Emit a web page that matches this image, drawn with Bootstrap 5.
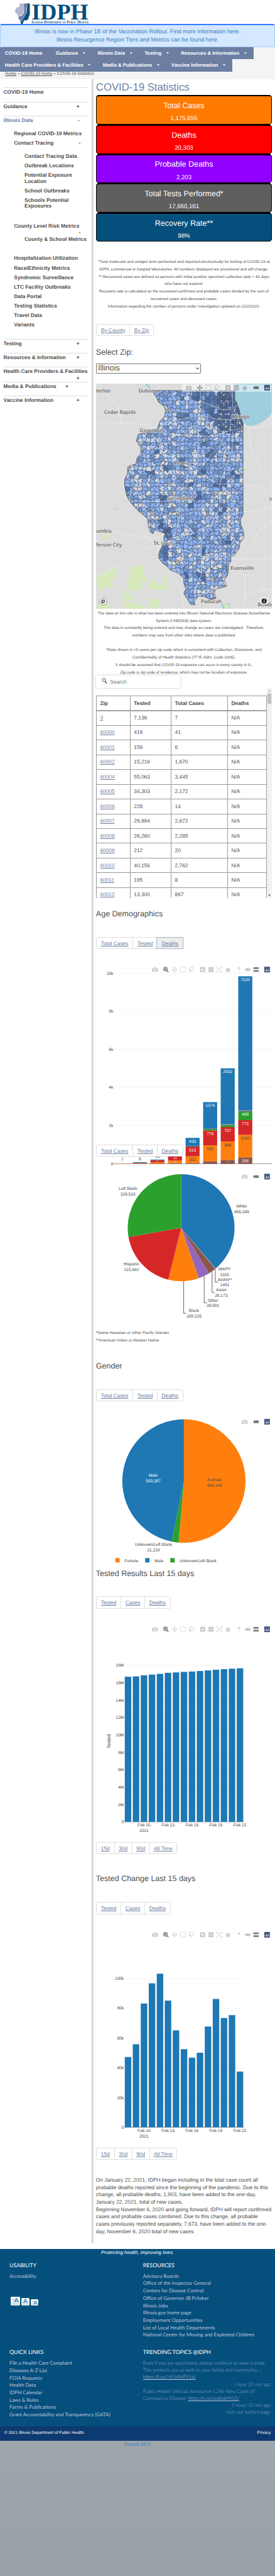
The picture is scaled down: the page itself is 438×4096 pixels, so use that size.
<!DOCTYPE html>
<html lang="en">
<head>
<meta charset="utf-8">
<meta name="viewport" content="width=device-width, initial-scale=1">
<title>COVID-19 Statistics | IDPH</title>
<link rel="stylesheet" href="https://cdn.jsdelivr.net/npm/bootstrap@5.3.0/dist/css/bootstrap.min.css">
<style>
html,body{background:#9aa4a9;margin:0;overflow:hidden}
.page{zoom:.55827;height:7337px;overflow:hidden;font:15px/21px "Liberation Sans",Arial,sans-serif;color:#4d4d4d;text-rendering:geometricPrecision;background:linear-gradient(#9ca6ab 95%,#97a1a7)}
.page svg{display:block;overflow:hidden}
.page svg text{font-family:"Liberation Sans",Arial,sans-serif}
.brand{height:68px}
.notice{height:66px;border:1px solid #a5cdfb;border-top:4px solid #337aff;border-radius:5px;background:#d4e8ff;color:#3a80bb;font-size:16.35px;line-height:22px;padding-top:8px;white-space:nowrap}
.topnav{background:#f4f4f4;height:92px;border-radius:0 0 6px 6px}
.bar-row{display:inline-flex;background:#6c7fa3;color:#fff;font-weight:700;font-size:14px;height:35px;line-height:36px;padding-left:0;vertical-align:top;white-space:nowrap}
.bar-row a{color:#fff;text-decoration:none;padding:0 41.6px 0 14px;position:relative}
.bar-row a:not(.plain)::after{content:"";position:absolute;right:20.5px;top:14px;border:4.7px solid transparent;border-top:5.5px solid #e9edf5;border-bottom:0}
.bar-row a.plain{padding-right:24px}
.crumbs{font-size:11.9px;line-height:16px;padding-left:15px}
.crumbs a{color:#4d4d4d}
.side{width:262px;padding:23.5px 10px 0;flex:none;font-weight:700;line-height:17px;white-space:nowrap}
.side ul{list-style:none;margin:0;padding:0}
.top-item{border-top:1px solid #ddd;min-height:40px;padding-top:3.5px}
.top-item>.hd{display:flex;flex-wrap:wrap;line-height:17px;padding-right:25px}
.hd i{font-style:normal;margin-left:auto}
.lvl2{padding:5px 0 5px 30px}
.lvl3{padding:5px 0 5px 60px}
.main-col{width:512.5px;padding-left:10px;border-left:1px solid #c4c4c4;background:linear-gradient(90deg,#dcdcdc,#fff 7px);height:6164px;flex:none}
.shell{background:#fff;height:6179px}
.main-col>*{width:502px}
h1.ttl{font-size:30px;line-height:45px;color:#6c7fa3;margin:0;font-weight:400}
h3.sec{font-size:22.4px;line-height:30px;margin:0;font-weight:400}
.stat{height:83.55px;border:1px solid #000;border-top:4px solid #000;border-radius:8px;color:#fff;text-align:center;padding-top:16px}
.stat b{display:block;font-weight:400;font-size:22.4px;line-height:22px}
.stat span{display:block;font-size:17.3px;line-height:20px;margin-top:16px}
.note{font-size:11.25px;text-align:center;white-space:nowrap}
.tabs{display:flex;width:max-content!important;height:34.5px;border:1px solid #dedede;border-radius:5px;background:#fff;line-height:34px}
.tabs a{color:#6c7fa3;text-align:center;border-left:1px solid #dedede;text-underline-offset:1.5px}
.tabs a:first-child{border:0}
.tabs a.on{background:#eee;outline:1px dotted #6c7fa3;outline-offset:-1px}
.zipsel{width:300px!important;height:29px;border:1px solid #777;border-radius:2px;font-size:22.4px;line-height:28px;padding:0 4px;display:flex;justify-content:space-between;align-items:center}
.finder{width:240px!important;height:36px;border-radius:4px;background:#fff;box-shadow:0 0 8px rgba(0,0,0,.2);padding-left:17px;line-height:36px;color:#757575;display:flex;gap:7px;position:relative}
.grid-box{height:599.5px;overflow:hidden;display:flex}
.grid-box table{width:487px;table-layout:fixed;border-collapse:collapse;margin-top:22px;flex:none;height:588.4px}
.grid-box td,.grid-box th{border:1px solid #999;height:42.03px;padding:0 10px;line-height:20px}
.grid-box thead tr{box-shadow:0 2px 2px rgba(0,0,0,.35)}
.grid-box td a{color:#6c7fa3}
.foot{background:#054f7d;height:506px;font-family:Lato,sans-serif;font-size:14.3px;color:#bcc3db;white-space:nowrap}
.foot h4{font-size:15.8px;line-height:21px;color:#fff;font-weight:400;margin:0}
.foot .tw{font-weight:300;font-size:13.8px;line-height:20px;color:#9fb4cf}
.foot .tw u{color:#bcc3db}
.abtn{background:linear-gradient(#fff,#d5dbe0);border-radius:3px;color:#2c7fb8;font-weight:700;text-align:center}
.legal{background:#0d3a70;color:#fff;height:40px;font-size:11.9px;line-height:39px;padding:0 12px}
</style>
</head>
<body>
<div class="page">
<div style="background:#fff">
<header class="brand"><svg width="300" height="68" viewBox="0 0 300 68">
<path d="M73 10H85L85 40L80 56H78L74 59L71 57L66 63L65 68H60L58 60L62 55L66 46L74 38L77 25Z" fill="#054f7d"/>
<path d="M66 10H75L78 17L75 27L77 34L72 42L69 49L66 52L63 60L58 59L52 53L53 48L49 46L62 45L68 36V24Z" fill="#6c7fa3" stroke="#fff" stroke-width=".8"/>
<path d="M53 10H66L69 22L67 36L61 45H50L48 40L42 34L44 26L48 21L54 20L56 14Z" fill="#b3b8d2" stroke="#fff" stroke-width=".6"/>
<g fill="#054f7d"><text x="90" y="56" font-size="64" font-weight="700" textLength="162" lengthAdjust="spacingAndGlyphs" style="font-family:'Liberation Serif',serif">IDPH</text>
<text x="90" y="67" font-size="11.5" textLength="162" lengthAdjust="spacingAndGlyphs" style="font-family:'Liberation Serif',serif;font-variant:small-caps;font-weight:700">Illinois Department of Public Health</text></g></svg></header>
<div class="notice text-center">Illinois is now in Phase 1B of the Vaccination Rollout. Find more information here.<br>Illinois Resurgence Region Tiers and Metrics can be found here.</div>
<nav class="topnav">
<div class="bar-row"><a class="plain">COVID-19 Home</a><a>Guidance</a><a>Illinois Data</a><a>Testing</a><a>Resources &amp; Information</a></div><br>
<div class="bar-row"><a>Health Care Providers &amp; Facilities</a><a>Media &amp; Publications</a><a>Vaccine Information</a></div>
<div class="crumbs"><a href="#">Home</a> » <a href="#">COVID-19 Home</a> » COVID-19 Statistics</div>
</nav>
</div>
<div class="shell d-flex">
<aside class="side"><ul>
<li class="top-item"><div class="hd">COVID-19 Home</div></li>
<li class="top-item"><div class="hd">Guidance<i>+</i></div></li>
<li class="top-item" style="height:635.3px"><div class="hd" style="color:#6c7fa3;padding-bottom:16.5px">Illinois Data<i style="color:#4d4d4d">-</i></div>
<div class="lvl2">Regional COVID-19 Metrics</div>
<div class="lvl2 hd d-flex" style="padding-right:22px">Contact Tracing<i>-</i></div>
<div style="height:209px;padding-top:10px"><div class="lvl3">Contact Tracing Data</div><div class="lvl3">Outbreak Locations</div><div class="lvl3">Potential Exposure<br>Location</div><div class="lvl3">School Outbreaks</div><div class="lvl3">Schools Potential<br>Exposures</div></div>
<div class="lvl2 pb-0">County Level Risk Metrics<div class="hd d-flex" style="padding-right:22px"><i>-</i></div></div>
<div class="lvl3" style="height:55px;margin-top:-2px">County &amp; School Metrics</div>
<div class="lvl2">Hospitalization Utilization</div><div class="lvl2">Race/Ethnicity Metrics</div><div class="lvl2">Syndromic Surveillance</div><div class="lvl2">LTC Facility Outbreaks</div><div class="lvl2">Data Portal</div><div class="lvl2">Testing Statistics</div><div class="lvl2">Travel Data</div><div class="lvl2">Variants</div></li>
<li class="top-item"><div class="hd">Testing<i>+</i></div></li>
<li class="top-item"><div class="hd">Resources &amp; Information<i>+</i></div></li>
<li class="top-item"><div class="hd" style="row-gap:3px">Health Care Providers &amp; Facilities<i>+</i></div></li>
<li class="top-item"><div class="hd" style="padding-right:57px">Media &amp; Publications<i>+</i></div></li>
<li class="top-item"><div class="hd">Vaccine Information<i>+</i></div></li>
</ul></aside>
<main class="main-col">
<h1 class="ttl">COVID-19 Statistics</h1>
<div class="stat" style="background:#ff7b00"><b>Total Cases</b><span>1,175,655</span></div>
<div class="stat" style="background:#f00"><b>Deaths</b><span>20,303</span></div>
<div class="stat" style="background:#9100ff"><b>Probable Deaths</b><span>2,203</span></div>
<div class="stat" style="background:#5f5f5f"><b>Total Tests Performed*</b><span>17,660,161</span></div>
<div class="stat" style="background:#054f7d"><b>Recovery Rate**</b><span>98%</span></div>
<div class="note" style="margin-top:48px">*Total molecular and antigen tests performed and reported electronically for testing of COVID-19 at<br>IDPH, commercial or hospital laboratories. All numbers displayed are provisional and will change.<br>** Recovered cases are defined as persons with initial positive specimen collection date &gt; 42 days<br>who have not expired.<br>Recovery rate is calculated as the recovered confirmed and probable cases divided by the sum of<br>recovered cases and deceased cases.<br>Information regarding the number of persons under investigation updated on 2/22/2021.</div>
<div class="tabs" style="margin-top:38.2px"><a href="#" style="width:94px">By County</a><a href="#" style="width:67px">By Zip</a></div>
<h3 class="sec" style="margin-top:33px">Select Zip:</h3>
<div class="zipsel" style="margin-top:15.5px"><span>Illinois</span><svg width="10" height="7" viewBox="0 0 10 7"><path d="M1 1l4 4 4-4" fill="none" stroke="#444" stroke-width="2"/></svg></div>
<div style="margin-top:29px;height:640.5px"><svg id="map" width="502" height="640.5" viewBox="273 1093 502 640.5"></svg></div>
<div class="note" style="padding-top:4px;height:189.7px">The data on this site is what has been entered into Illinois' National Electronic Disease Surveillance<br>System (I-NEDSS) data system.<br>The data is constantly being entered and may change as cases are investigated.&nbsp; Therefore,<br>numbers may vary from other sites where data is published.<br><br>*Data shown is &gt;5 cases per zip code which is consistent with Collection, Disclosure, and<br>Confidentiality of Health Statistics (77 Ill. Adm. Code 1005).<br>It should be assumed that COVID-19 exposure can occur in every county in IL.<br>Zip code is zip code of residence, which may not be location of exposure.</div>
<div class="finder"><svg width="16" height="30" viewBox="0 0 16 30"><circle cx="6.5" cy="13" r="4.7" fill="none" stroke="#444" stroke-width="1.7"/><path d="M10 17l5 6" stroke="#444" stroke-width="2.2"/></svg>Search</div>
<div class="grid-box"><table><colgroup><col style="width:96.5px"><col style="width:117px"><col style="width:161px"><col></colgroup><thead><tr><th>Zip</th><th>Tested</th><th>Total Cases</th><th>Deaths</th></tr></thead><tbody id="rows"></tbody></table>
<svg width="15" height="599" viewBox="0 0 15 599"><path fill="#f1f1f1" d="M0 0h15v599H0z"/><path fill="#c1c1c1" d="M2 15h11v30H2z"/><path fill="#a3a3a3" d="M4 9.500l3.500-4 3.500 4z"/><path fill="#505050" d="M4 589l3.500 4 3.500-4z"/></svg></div>
<h3 class="sec" style="margin-top:30.500px">Age Demographics</h3>
<div class="tabs" style="margin-top:50px"><a href="#" style="width:103px">Total Cases</a><a href="#" style="width:69px">Tested</a><a href="#" class="on" style="width:73px">Deaths</a></div>
<div class="position-relative"><svg id="age" width="502" height="616.500" viewBox="273 2703.500 502 616.500"></svg>
<div class="tabs position-absolute start-0" style="top:556px"><a href="#" style="width:103px">Total Cases</a><a href="#" style="width:69px">Tested</a><a href="#" style="width:73px">Deaths</a></div></div>
<svg id="race" width="502" height="466.800" viewBox="273 3320 502 466.800"></svg>
<div class="note text-start">*Native Hawaiian or Other Pacific Islander<br>**American Indian or Alaskan Native</div>
<h3 class="sec" style="margin-top:48.200px">Gender</h3>
<div class="tabs" style="margin-top:50px"><a href="#" style="width:103px">Total Cases</a><a href="#" style="width:69px">Tested</a><a href="#" style="width:73px">Deaths</a></div>
<svg id="gender" width="502" height="475.500" viewBox="273 3991.500 502 475.500"></svg>
<h3 class="sec">Tested Results Last 15 days</h3>
<div class="tabs" style="margin-top:50px"><a href="#" style="width:69px">Tested</a><a href="#" style="width:67px">Cases</a><a href="#" style="width:73px">Deaths</a></div>
<svg id="tot" width="502" height="665.500" viewBox="273 4581.500 502 665.500"></svg>
<div class="tabs"><a href="#" style="width:50px">15d</a><a href="#" style="width:50px">30d</a><a href="#" style="width:50px">90d</a><a href="#" style="width:78px">All Time</a></div>
<h3 class="sec" style="margin-top:55.500px">Tested Change Last 15 days</h3>
<div class="tabs" style="margin-top:50.500px"><a href="#" style="width:69px">Tested</a><a href="#" style="width:67px">Cases</a><a href="#" style="width:73px">Deaths</a></div>
<svg id="chg" width="502" height="665" viewBox="273 5452 502 665"></svg>
<div class="tabs"><a href="#" style="width:50px">15d</a><a href="#" style="width:50px">30d</a><a href="#" style="width:50px">90d</a><a href="#" style="width:78px">All Time</a></div>
<p class="m-0 text-nowrap" style="padding-top:48px">On January 22, 2021, IDPH began including in the total case count all<br>probable deaths reported since the beginning of the pandemic. Due to this<br>change, all probable deaths, 1,903, have been added to the one-day,<br>January 22, 2021, total of new cases.<br>Beginning November 6, 2020 and going forward, IDPH will report confirmed<br>cases and probable cases combined. Due to this change, all probable<br>cases previously reported separately, 7,673, have been added to the one-<br>day, November 6, 2020 total of new cases</p>
</main>
</div>
<footer class="foot">
<div class="text-center text-white fst-italic" style="font:italic 13.900px/20px 'Liberation Sans',sans-serif;height:36px">Protecting health, improving lives.</div>
<div class="d-flex" style="height:248px"><div style="width:381px;margin-left:27px"><h4>USABILITY</h4><div style="margin-top:11px">Accessibility</div>
<div class="d-flex align-items-end gap-1" style="height:25px;margin:48px 0 0 4px"><div class="abtn" style="width:26px;height:25px;font-size:18px;line-height:25px"><sup style="font-size:9px;top:-.7em">+</sup>A</div><div class="abtn" style="width:23px;height:22px;font-size:17px;line-height:22px">A</div><div class="abtn" style="width:21px;height:19px;font-size:14px;line-height:19px"><sup style="font-size:8px;top:-.6em">−</sup>A</div></div></div>
<div><h4>RESOURCES</h4><div style="margin-top:11px">Advisory Boards<br>Office of the Inspector General<br>Centers for Disease Control<br>Office of Governor JB Pritzker<br>Illinois Jobs<br>Illinois.gov home page<br>Employment Opportunities<br>List of Local Health Departments<br>National Center for Missing and Exploited Children</div></div></div>
<div class="d-flex"><div style="width:381px;margin-left:27px"><h4>QUICK LINKS</h4><div style="margin-top:11px">File a Health Care Complaint<br>Diseases A-Z List<br>FOIA Requests<br>Health Data<br>IDPH Calendar<br>Laws &amp; Rules<br>Forms &amp; Publications<br>Grant Accountability and Transparency (GATA)</div></div>
<div style="width:364.500px"><h4>TRENDING TOPICS @IDPH</h4><div class="tw" style="margin-top:11px">Even if you are vaccinated, please continue to wear a mask.<br>This protects you as well as your family and community.…<br><u>https://t.co/YKS4MF916j</u><div class="text-end">- <em>1 hour 32 min</em> ago</div>Public Health Officials Announce 1,246 New Cases of<br>Coronavirus Disease: <u>https://t.co/sxabskMrQV</u><div class="text-end">- <em>5 hours 32 min</em> ago</div><div class="text-end" style="font-size:14.300px">Visit our twitter page</div></div></div></div>
</footer>
<div class="legal d-flex justify-content-between"><span>© 2021 Illinois Department of Public Health.</span><span>Privacy</span></div>
<div class="text-center" style="font-size:13.900px;color:#3a80bb;line-height:20px">Drupal SEO</div>
</div>
<script src="https://cdn.jsdelivr.net/npm/bootstrap@5.3.0/dist/js/bootstrap.bundle.min.js"></script>
<script>
const $=id=>document.getElementById(id);
$('rows').innerHTML=[['3','7,136','7'],['60000','419','41'],['60001','159','6'],['60002','15,216','1,670'],['60004','55,063','3,445'],['60005','34,303','2,172'],['60006','228','14'],['60007','29,994','2,672'],['60008','26,260','2,285'],['60009','212','20'],['60010','40,156','2,762'],['60011','195','8'],['60012','13,300','867']]
 .map(r=>`<tr><td><a href="#">${r[0]}</a></td><td>${r[1]}</td><td>${r[2]}</td><td>N/A</td></tr>`).join('');

const rect=(x,y,w,h,f)=>`<rect x="${x}" y="${y}" width="${w}" height="${h}" fill="${f}"/>`;
// text centred vertically on y
const txt=(s,x,y,o={})=>{const z=o.s||11.9;return `<text x="${x}" y="${y+z*.358}" font-size="${z}" fill="${o.f||'#444'}" text-anchor="${o.a||'middle'}">${s}</text>`};
const G='#c7c7c7',D='#7c7c7c',B='#1f77b4',O='#ff7f0e',GR='#2ca02c',R='#d62728',P='#9467bd',BR='#8c564b';

// toolbar glyphs on a 16 x 16 box centred on the origin
const glyph={
 cam:c=>`<path fill="${c}" fill-rule="evenodd" d="M-7-4h3l1.500-2h5l1.500 2h3q1 0 1 1v8q0 1-1 1h-14q-1 0-1-1v-8q0-1 1-1zM0-3a4 4 0 100 8 4 4 0 000-8zm0 1.800a2.200 2.200 0 110 4.400 2.200 2.200 0 010-4.400z"/>`,
 zoom:c=>`<circle cx="-1.500" cy="-1.500" r="5.300" fill="none" stroke="${c}" stroke-width="2.400"/><path d="M2.500 2.500L7 7" stroke="${c}" stroke-width="3"/><path fill="${c}" d="M-4-4h5v5h-5z"/>`,
 pan:c=>`<path d="M-6 0H6M0-6V6" stroke="${c}" stroke-width="1.500"/><path fill="${c}" d="M-8 0l3-3v6zM8 0l-3-3v6zM0-8l-3 3h6zM0 8l-3-3h6z"/>`,
 box:c=>`<rect x="-7" y="-7" width="14" height="14" fill="none" stroke="${c}" stroke-width="2" stroke-dasharray="2 2"/>`,
 lasso:c=>`<path fill="none" stroke="${c}" stroke-width="1.600" d="M-3 4C-9 1-8-7 0-7 9-7 9 3 1 4 -2 4-4 3-4 1c1-2 4 0 2 3-1 2-2 2-2 4"/>`,
 plus:c=>`<path fill="${c}" fill-rule="evenodd" d="M-7-7H7V7H-7zM-1-4v3h-3v2h3v3h2v-3h3v-2h-3v-3z"/>`,
 minus:c=>`<path fill="${c}" fill-rule="evenodd" d="M-7-7H7V7H-7zM-4-1v2h8v-2z"/>`,
 auto:c=>`<path fill="none" stroke="${c}" stroke-width="1.500" d="M-7-3v-4h4M3-7h4v4M7 3v4H3M-3 7h-4V3M-4-4L4 4M4-4L-4 4"/>`,
 home:c=>`<path fill="${c}" d="M-7 1L0-6l3 2.600V-5h2v3.500L7 1 6 2 0-4-6 2zM-5 2l5-5 5 5v5H1V3h-2v4h-4z"/>`,
 spike:c=>`<circle cx="3" cy="-4" r="2.500" fill="${c}"/><path stroke="${c}" stroke-width="1.500" stroke-dasharray="2 2" d="M-7-4H1M3-1V8"/>`,
 tag:c=>`<path fill="${c}" d="M-8 0l3-4H8v8H-5z"/>`,
 tags:c=>`<path fill="${c}" d="M-8-4l2-2.500H8v5H-6zM-8 4l2-2.500H8v5H-6z"/>`,
 logo:()=>`<path fill="#3d4f7c" d="M-8-8H8V8H-8z"/><path stroke="#fff" stroke-width="1.500" d="M-4.500 1v4M-1.500-2v7M1.500 1v4M4.500-2v7"/><path stroke="#7fd" stroke-width="1" stroke-dasharray="1 2" d="M-5-5H5"/>`};
const bar=(y,l)=>l.map(([k,x,c])=>`<g transform="translate(${x} ${y})">${glyph[k](c||G)}</g>`).join('');
const full=y=>bar(y,[['cam',441],['zoom',472.5,D],['pan',497],['box',521],['lasso',545],['plus',577],['minus',601],['auto',625],['home',649],['spike',679],['tag',705],['tags',729,D],['logo',761]]);
const mini=y=>bar(y,[['cam',697],['tag',729,D],['logo',761]]);

// age chart
{const Y=v=>3315.1-v*.05433;let s='';
 for(let v=0;v<=10000;v+=2000)s+=rect(323,Y(v)-.5,452,1.2,v?'#eee':'#666')+txt(v?v/1000+'k':'0',322,Y(v),{a:'end'});
 const st=[[[16,O]],[[5,BR],[22,O],[20,R],[33,B]],[[10,BR],[65,O],[108,R],[12,GR],[26,B]],[[32,BR],[138,O],[259,R],[20,GR],[120,B]],[[38,BR],[352,O],[513,R],[20,GR],[433,B]],[[130,BR],[835,O],[779,R],[84,GR],[30,P],[1374,B]],[[200,BR],[969,O],[757,R],[115,GR],[30,P],[2932,B]],[[336,BR],[1182,O],[772,R],[468,GR],[50,P],[7020,B]]];
 st.forEach((b,i)=>{let t=0,x=328+i*50.1;b.forEach(([v,c])=>{s+=rect(x,Y(t+v),40,v*.05433+.15,c);
   if(v>330)s+=txt(v,x+20,Y(t+v)+9.5,{f:c==O?'#444':'#fff'});else if(v>100&&c!=B&&v!=115&&v!=130)s+=txt(v,x+20,Y(t+v/2),{s:v==259?6:4,f:'#fff'});t+=v})});
 s+=txt(7,348,3303.5)+txt(6,398,3300.5)+txt(26,448.5,3294.5);
 $('age').innerHTML=full(2762)+s}

function pie(cx,cy,r,d){const T=d.reduce((a,b)=>a+b[0],0);let a=0;return d.map(([v,c])=>{const p=a;a+=v/T*2*Math.PI;
 return `<path fill="${c}" d="M${cx} ${cy}L${cx+r*Math.sin(p)} ${cy-r*Math.cos(p)}A${r} ${r} 0 ${a-p>Math.PI?1:0} 1 ${cx+r*Math.sin(a)} ${cy-r*Math.cos(a)}Z"/>`}).join('')}
$('race').innerHTML=mini(3352)+pie(515.7,3497.7,152.4,[[456269,B],[1103,'#7f7f7f'],[1451,'#7f7f9f'],[26173,BR],[39981,P],[108226,O],[215942,R],[326510,GR]])
 +'<path fill="none" stroke="#444" stroke-width="1.500" d="M523 3650V3741.500h7.500M581.500 3635.500V3711.500h7M604 3622V3682h7M613 3615V3652.500h7.500"/>'
 +[['Left Blank',364,3386],['326,510',364,3401],['White',688,3435],['456,269',688,3451],['NH/PI*',639.5,3615],['1103',639.5,3631],['AI/AN**',640.5,3645],['1451',640.5,3660],['Asian',630,3674],['26,173',630,3690],['Other',606.5,3704],['39,981',606.5,3719],['Black',552.3,3733],['108,226',552.3,3749],['Hispanic',374,3601],['215,942',374,3616]].map(a=>txt(...a)).join('');
$('gender').innerHTML=mini(4050)+pie(523.7,4219,175.8,[[604140,O],[21228,GR],[550287,B]])
 +txt('Male',436,4202,{f:'#fff'})+txt('550,287',436,4218,{f:'#fff'})+txt('Female',611,4215)+txt('604,140',611,4231)+txt('Unknown/Left Blank',437,4400)+txt('21,228',437,4415)
 +[['Female',328,354,O],['Male',413,439.5,B],['Unknown/Left Blank',484.7,510.7,GR]].map(l=>rect(l[1],4438.3,12.3,12.5,l[3])+txt(l[0],l[2],4445,{a:'start'})).join('');

function bars(id,mb,y0,ticks,step,tops,k,lab){let s=full(mb);
 ticks.forEach((t,i)=>s+=rect(353,y0-i*step-.5,341.5,i?1:1.4,i?'#eee':'#777')+txt(t,352,y0-i*step,{a:'end'}));
 tops.forEach((h,i)=>{const x=354.9+i*22.82;s+=rect(x,y0-h*k,18.5,h*k,B)});
 ['Feb 10','Feb 13','Feb 16','Feb 19','Feb 22'].forEach((t,i)=>s+=txt(t,409.9+i*68.35,y0+9));
 s+=txt('2021',409.9,y0+25);$(id).innerHTML=s+lab}
bars('tot',4640,5188.4,['0','2M','4M','6M','8M','10M','12M','14M','16M','18M'],49.56,[500,498,492,488,484,478,476,473,471,468,465,461,458,455,453].map(v=>1310-v),.5102,'<g transform="translate(309.500 4959) rotate(-90)">'+txt('Tested',0,0,{s:14})+'</g>');
bars('chg',5510,6058.5,['0','20k','40k','60k','80k','100k'],84.94,[844,787,605,515,472,592,725,809,847,825,708,585,670,657,909].map(v=>1158-v),.6378,'');

// zip code choropleth over the base map
{let seed=7;const rnd=()=>(seed=(seed*16807)%2147483647)/2147483647,j=a=>(rnd()-.5)*a;
 const il='M880 75H1337L1335 130 1350 165 1362 205 1368 240 1383 290V890L1368 925 1372 960 1385 1000 1388 1040 1365 1075 1362 1110 1330 1160 1312 1165 1315 1195 1300 1215V1250L1295 1290 1275 1320 1290 1360 1225 1380 1220 1410 1230 1440 1200 1450 1165 1430 1130 1425 1105 1460 1110 1483 1085 1480 1065 1445 1045 1405 1058 1380 1045 1340V1310L1015 1275 970 1255 955 1235 925 1210 902 1175V1145L918 1105 935 1065 930 1045 940 1015 880 990 870 1015 855 1005 845 975 838 915 785 865 735 800 720 765 708 700V660L725 620V580L740 568 772 558 780 515 800 490V450L775 405 787 362 830 350 895 325 908 280 935 245 942 210 935 180 900 150 890 120 872 95Z';
 const towns=[[1320,200,150],[1200,150,70],[1145,110,45],[1040,250,38],[1025,120,25],[1045,535,30],[1140,600,28],[1075,690,25],[930,785,28],[1260,690,38],[965,1010,42],[940,1140,45],[1135,770,30],[1160,430,30],[895,490,25],[730,745,28],[1330,430,30],[1155,1140,28],[1150,1290,30],[855,610,22],[1255,850,35],[1290,1050,30],[1160,370,30],[1340,630,28],[1080,840,22],[1200,500,25],[960,590,25],[1065,1290,22],[915,950,25],[1110,1010,25]];
 const dk=['#4f72aa','#4a6ba2','#5577b0','#6488c2'],lt=['#8fb6f8','#8fb6f8','#8ab0f1','#7fa6e3','#83aaea','#a9c6f5','#c3d5f0','#d4dceb','#d6dbe5','#95bbfa','#739ad6'];
 function mesh(x0,y0,x1,y1,w,h){const nx=Math.ceil((x1-x0)/w),ny=Math.ceil((y1-y0)/h),V=[],H=[],U=[];let o='';
  for(let r=0;r<=ny;r++){V[r]=[];H[r]=[];U[r]=[];for(let c=0;c<=nx;c++){const x=x0+c*w,y=y0+r*h;V[r][c]=[x+j(w*.75),y+j(h*.75)];
   H[r][c]=[];let m=x+w*(.35+rnd()*.3),q=y+j(h*.6),q2=y+j(h*.6);H[r][c]=[[m,q],[m,q2]];
   m=y+h*(.35+rnd()*.3);q=x+j(w*.6);q2=x+j(w*.6);U[r][c]=[[q,m],[q2,m]]}}
  for(let r=0;r<ny;r++)for(let c=0;c<nx;c++){const p=[V[r][c],...H[r][c],V[r][c+1],...U[r][c+1],V[r+1][c+1],...[...H[r+1][c]].reverse(),V[r+1][c],...[...U[r][c]].reverse()];
   const x=x0+c*w+w/2,y=y0+r*h+h/2,near=towns.some(t=>Math.hypot(x-t[0],(y-t[1])*.87)<t[2]*.85);
   const pal=near&&rnd()<.86?dk:lt;o+=`<path fill="${rnd()<.008?'#bbb':pal[rnd()*pal.length|0]}" d="M${p.map(a=>a[0].toFixed(0)+' '+a[1].toFixed(0)).join('L')}Z"/>`}
  return o}
 const lab=[['terloo',545,78,'start'],['Dubuque',851,78],['Cedar Rapids',681,217],['Davenport',866,336],['Chicago',1367,244],['Peoria',1034,551],['Springfield',1024,781],['umbia',546,996,'start'],['ferson City',545,1089,'start'],['St. Louis',931,1077],['Evansville',1378,1240],['Paducah',1202,1460],['Bowlin',1467,1483,'start'],['In',1532,789,'start']];
 $('map').innerHTML=rect(273,1093,502,641,'#ddd')+`<clipPath id="il"><path d="${il}"/></clipPath><g transform="translate(0 1080) scale(.5006 .4337)">
 <path fill="#9fcfdf" d="M1337 30H1548V215Q1535 255 1500 275 1455 310 1420 307L1400 305 1398 292 1383 290 1368 240 1350 165 1335 130ZM820 30l28 8 8 28 10 20-6-2-18-30zM650 852l15-3 12 4-12 4zM1255 1478l48-8 5 38h-38z"/>
 <path fill="#d5e9ba" d="M552 1285h40v-20h30l8-24 30 5v60h-20v65h-28v-12h-22l-8 32-12-5-8-20h-10zM745 1230l72-2v50l18 40-5 12h-22v50h-38l-8 20-20-4v-20h-20zM852 1330l25-12 20 35h28v-60h24v88h-97zM552 1480l40-15 35 20-15 23h-60zM718 1470h45l5 10h45v28H708zM850 1445h60v38l-18 6v19h-42zM595 1010l15 5 2-10 16 50-12-20-20 27-16 2 10-30zM1272 1480l24-6 6 34h-22z"/>
 <path fill="none" stroke="#d5e9ba" stroke-width="8" d="M680 1370l35 25-25 40 55-20-30 40 35-20 30 30M675 1465l40 0 0-80M700 1390l40 50M895 150l45 40"/>
 <g fill="none" stroke="#f3f3f3" stroke-width="2.500"><path d="M595 95L640 130 673 180 685 290M545 289H685L830 300 850 315 905 320M1420 320L1428 470 1490 600 1548 675M1384 300L1420 320 1500 315 1548 285M1475 318L1510 290 1548 235M640 996L700 1020 790 1030 850 1040 935 1045M545 1290L600 1275 635 1245 715 1220 780 1160 820 1115 900 1100M902 1110L895 1180 940 1240 1000 1330 1030 1400 1045 1508M820 1030L890 1095 920 1110M1383 697L1460 700 1548 745M1383 870L1470 865 1548 835M1548 930L1460 1010 1455 1060 1410 1120 1390 1180 1320 1185M1390 1185L1548 1178M1375 1275L1395 1310 1392 1508M1380 1285L1445 1290M1460 1298L1520 1410 1548 1480M1395 1425L1460 1395 1548 1380M1230 1440L1260 1480"/></g>
 <g clip-path="url(#il)"><g stroke="#484c54" stroke-width="2" stroke-linejoin="round">${mesh(690,60,1400,1500,24,27)}${mesh(1240,70,1390,345,13,14)}</g>
 <g fill="none" stroke="#e3eaf5" stroke-width="2.500"><path d="M1140 75V150L1130 240 1125 380V600L1065 690 1025 790 1020 920 990 1040M1140 145L1260 200H1320M905 325L950 285 1130 240 1200 250 1230 265H1340M905 350L1050 375H1230L1270 350 1383 320M908 320V490L990 515 1040 565 1115 580 1130 610 1240 690H1383M1320 75L1325 190 1383 330M1270 350L1265 420 1200 500 1130 600M1325 345L1320 470 1250 690V850L1200 960 1145 1060V1290L1108 1380V1480M735 800L920 805 1020 790M960 1050L1100 1015 1300 900 1383 870M960 1080L1050 1125 1150 1165H1330M745 720L735 800"/></g></g>
 <path fill="none" stroke="#555" stroke-width="3" d="${il}"/></g>`
 +lab.map(l=>{const x=l[1]/1.9975,y=1080+l[2]/2.306+4.9;return `<text x="${x}" y="${y}" text-anchor="${l[3]||'middle'}" style="font:600 14.200px 'Open Sans','Noto Sans',sans-serif" fill="#666" stroke="#e6e6e6" stroke-opacity=".75" stroke-width="2.500" paint-order="stroke">${l[0]}</text>`}).join('')
 +'<rect x="517" y="1095" width="256" height="21" fill="#fff" fill-opacity=".5"/>'+bar(1104.7,[['cam',537.5,'#b5b5b5'],['pan',569,'#666'],['box',593,'#b5b5b5'],['lasso',617,'#b5b5b5'],['plus',649,'#b5b5b5'],['minus',673,'#a5b0b5'],['home',697,'#a5b0b5'],['tag',729,'#6a7373'],['logo',761]])
 +'<circle cx="293.300" cy="1713.500" r="10" fill="#fff" stroke="#888" stroke-width="1.500"/><path fill="#666" d="M288 1719v-6a5.500 5.500 0 115.500 5.500z"/><circle cx="294" cy="1713" r="2" fill="#fff"/><circle cx="752.500" cy="1712" r="12" fill="#fff" fill-opacity=".5"/><circle cx="752.500" cy="1712" r="7.300" fill="#222"/><path stroke="#fff" stroke-width="2.200" d="M752.500 1707v2M752.500 1711v5"/>';
}
</script>
</body>
</html>
